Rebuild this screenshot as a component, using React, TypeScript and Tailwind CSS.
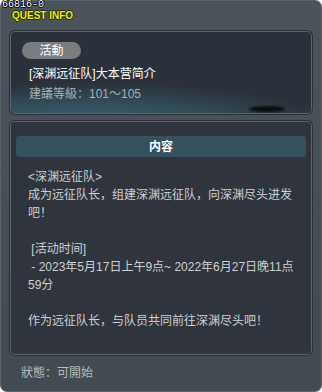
export default function App() {
  const lines = [
    "<深渊远征队>",
    "成为远征队长，组建深渊远征队，向深渊尽头进发",
    "吧！",
    "\u00a0",
    " [活动时间]",
    " - 2023年5月17日上午9点~ 2022年6月27日晚11点",
    "59分",
    "\u00a0",
    "作为远征队长，与队员共同前往深渊尽头吧！",
  ];

  return (
    <div
      className="relative h-[392px] w-[322px] overflow-hidden bg-white"
      style={{ fontFamily: '"Liberation Sans", "Noto Sans CJK SC", sans-serif' }}
    >
      <div className="flex h-[392px] w-[322px] flex-col rounded-[7px] border border-[#5c646c] bg-linear-to-b from-[#4b535b] to-[#434a52] px-[9px] pt-[30px] pb-[3px]">
        {/* header panel */}
        <div className="relative h-[83px] shrink-0 overflow-hidden rounded-[5px] border border-[#5a6570] bg-[#2b313a] shadow-[0_0_0_1px_#2a3036]">
          <div className="pointer-events-none absolute inset-0 bg-[radial-gradient(ellipse_110%_70%_at_25%_115%,#3d6272_0%,#33505e_35%,rgba(43,49,58,0)_75%)]" />
          <div className="pointer-events-none absolute top-[74px] left-[238px] h-[6px] w-[36px] rounded-[50%] bg-[#0a0c0e] blur-[1px]" />
          <div className="relative flex flex-col px-[11px] pt-[10px]">
            <span className="flex h-[17px] w-[59px] items-center justify-center rounded-full bg-[#7a7d80] text-[12px] leading-none text-white">
              活動
            </span>
            <p className="mt-[8px] pl-[7px] text-[12px] leading-[15px] text-white">
              [深渊远征队]大本营简介
            </p>
            <p className="mt-[5px] pl-[7px] text-[12px] leading-[15px] text-[#a3b2ba]">
              建議等級：101～105
            </p>
          </div>
        </div>

        {/* content panel */}
        <div className="mt-[7px] flex h-[234px] shrink-0 flex-col rounded-[5px] border border-[#5a6570] bg-[#2f343d] px-[5px] pt-[14px] shadow-[0_0_0_1px_#2a3036]">
          <div className="flex h-[21px] items-center justify-center rounded-[3px] bg-[#36505e] text-[12px] font-bold text-white">
            内容
          </div>
          <div className="mt-[11px] pl-[12px] text-[12px] leading-[18px] text-[#cdd1d5]">
            {lines.map((l, i) => (
              <p key={i} className="whitespace-pre">
                {l}
              </p>
            ))}
          </div>
        </div>

        <p className="mt-[11px] pl-[11px] text-[12px] leading-[15px] text-[#b8bcc0]">狀態：可開始</p>
      </div>

      <div
        className="absolute top-0 left-[2px] text-[10px] leading-[10px] text-white [text-shadow:1px_0_0_#000,-1px_0_0_#000,0_1px_0_#000,0_-1px_0_#000]"
        style={{ fontFamily: '"Liberation Mono", monospace' }}
      >
        66816-0
      </div>
      <div className="absolute top-[11px] left-[12px] text-[10px] leading-[10px] font-bold text-[#e4f020] [text-shadow:1px_0_0_#2a2a00,-1px_0_0_#2a2a00,0_1px_0_#2a2a00,0_-1px_0_#2a2a00]">
        QUEST INFO
      </div>
    </div>
  );
}
